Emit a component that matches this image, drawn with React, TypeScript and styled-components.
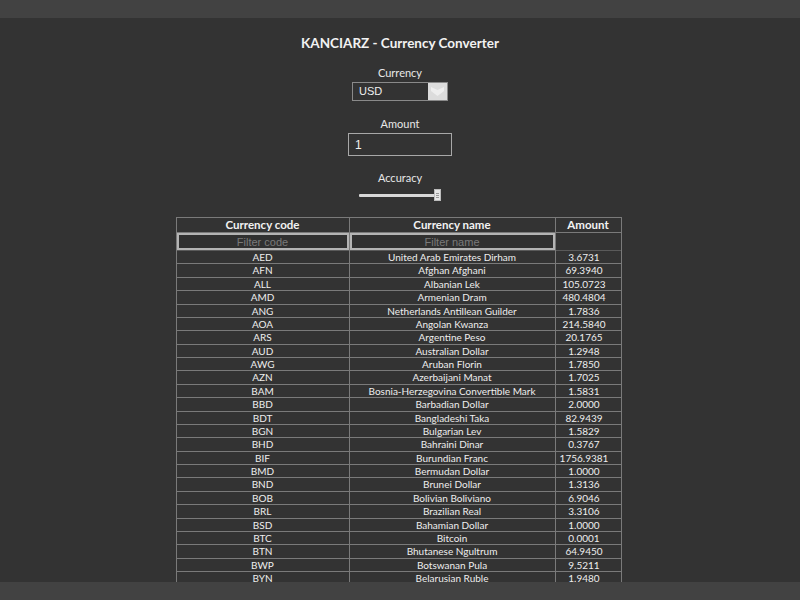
import { useState } from 'react';
import styled, { createGlobalStyle } from 'styled-components';

const rates: [string, string, string][] = [
  ['AED', 'United Arab Emirates Dirham', '3.6731'],
  ['AFN', 'Afghan Afghani', '69.3940'],
  ['ALL', 'Albanian Lek', '105.0723'],
  ['AMD', 'Armenian Dram', '480.4804'],
  ['ANG', 'Netherlands Antillean Guilder', '1.7836'],
  ['AOA', 'Angolan Kwanza', '214.5840'],
  ['ARS', 'Argentine Peso', '20.1765'],
  ['AUD', 'Australian Dollar', '1.2948'],
  ['AWG', 'Aruban Florin', '1.7850'],
  ['AZN', 'Azerbaijani Manat', '1.7025'],
  ['BAM', 'Bosnia-Herzegovina Convertible Mark', '1.5831'],
  ['BBD', 'Barbadian Dollar', '2.0000'],
  ['BDT', 'Bangladeshi Taka', '82.9439'],
  ['BGN', 'Bulgarian Lev', '1.5829'],
  ['BHD', 'Bahraini Dinar', '0.3767'],
  ['BIF', 'Burundian Franc', '1756.9381'],
  ['BMD', 'Bermudan Dollar', '1.0000'],
  ['BND', 'Brunei Dollar', '1.3136'],
  ['BOB', 'Bolivian Boliviano', '6.9046'],
  ['BRL', 'Brazilian Real', '3.3106'],
  ['BSD', 'Bahamian Dollar', '1.0000'],
  ['BTC', 'Bitcoin', '0.0001'],
  ['BTN', 'Bhutanese Ngultrum', '64.9450'],
  ['BWP', 'Botswanan Pula', '9.5211'],
  ['BYN', 'Belarusian Ruble', '1.9480'],
  ['BZD', 'Belize Dollar', '2.0095'],
  ['CAD', 'Canadian Dollar', '1.2563'],
];

const GlobalStyle = createGlobalStyle`
  html, body {
    margin: 0;
    padding: 0;
    background: #424242;
    height: 100%;
  }
  #root {
    height: 100%;
  }
`;

const Page = styled.div`
  height: 100%;
  box-sizing: border-box;
  padding: 18px 0;
  display: flex;
`;

const Main = styled.main`
  flex: 1;
  background: #333333;
  overflow: hidden;
  display: flex;
  flex-direction: column;
  align-items: center;
  font-family: Lato, 'Open Sans', sans-serif;
  color: #eeeeee;
`;

const Title = styled.h1`
  margin: 16px 0 0;
  font-size: 13.5px;
  font-weight: 700;
  line-height: 18px;
  color: #f2f2f2;
`;

const Field = styled.div<{ $gap?: number }>`
  display: flex;
  flex-direction: column;
  align-items: center;
  margin-top: ${(p) => p.$gap ?? 0}px;
`;

const Label = styled.label`
  font-size: 11px;
  line-height: 14px;
  margin-bottom: 2px;
  color: #e8e8e8;
`;

const SelectBox = styled.div`
  display: flex;
  width: 96px;
  height: 19px;
  box-sizing: border-box;
  border: 1px solid #8a8a8a;
  background: #333;
`;

const SelectText = styled.span`
  flex: 1;
  font-family: 'Liberation Sans', Arial, sans-serif;
  font-size: 11px;
  line-height: 17px;
  padding-left: 6px;
  color: #f0f0f0;
`;

const SelectArrow = styled.span`
  width: 19px;
  background: #dcdcdc;
  display: flex;
  align-items: center;
  justify-content: center;
`;

const AmountInput = styled.input`
  width: 104px;
  height: 23px;
  box-sizing: border-box;
  border: 1px solid #a8a8a8;
  background: #333;
  color: #f0f0f0;
  font-family: 'Liberation Sans', Arial, sans-serif;
  font-size: 12px;
  padding: 0 6px;
  outline: none;
`;

const SliderTrack = styled.div`
  position: relative;
  width: 82px;
  height: 12px;
  margin-top: 2px;
  display: flex;
  align-items: center;
`;

const Rail = styled.div`
  width: 100%;
  height: 3px;
  background: #d8d8d8;
  border-radius: 1px;
`;

const Thumb = styled.div`
  position: absolute;
  right: 0;
  top: 0;
  width: 7px;
  height: 12px;
  box-sizing: border-box;
  background: #e6e6e6;
  border: 1px solid #bcbcbc;
  display: flex;
  flex-direction: column;
  justify-content: center;
  gap: 1px;
  padding: 0 1px;
  & > i {
    display: block;
    height: 1px;
    background: #999;
  }
`;

const Table = styled.table`
  margin: 16px 3px 0 0;
  border-collapse: collapse;
  border: 1px solid #7a7a7a;
  table-layout: fixed;
  width: 442px;
  font-size: 10px;
`;

const HeadCell = styled.th<{ $w: number }>`
  width: ${(p) => p.$w}px;
  border: 1px solid #7a7a7a;
  font-size: 11.5px;
  font-weight: 700;
  line-height: 14px;
  padding: 0;
  color: #f2f2f2;
`;

const FilterCell = styled.td`
  padding: 0;
  border-left: 1px solid #7a7a7a;
  border-right: 1px solid #7a7a7a;
  height: 17px;
`;

const FilterInput = styled.input`
  width: 100%;
  height: 17px;
  box-sizing: border-box;
  border: 2px solid #b4b4b4;
  background: #303030;
  font-family: 'Liberation Sans', Arial, sans-serif;
  font-size: 11px;
  text-align: center;
  color: #eee;
  padding: 0;
  outline: none;
  &::placeholder {
    color: #7a7a7a;
  }
`;

const Cell = styled.td<{ $num?: boolean }>`
  border: 1px solid #7a7a7a;
  border-top-color: #5a5a5a;
  padding: 0 ${(p) => (p.$num ? '8px' : '0')} 0 0;
  text-align: center;
  line-height: 12.375px;
  white-space: nowrap;
  overflow: hidden;
  color: #eeeeee;
`;

export default function App() {
  const [amount, setAmount] = useState('1');
  const [code, setCode] = useState('');
  const [name, setName] = useState('');

  const rows = rates.filter(
    ([c, n]) =>
      c.toLowerCase().includes(code.toLowerCase()) &&
      n.toLowerCase().includes(name.toLowerCase()),
  );
  const mult = parseFloat(amount) || 0;

  return (
    <>
      <GlobalStyle />
      <Page>
        <Main>
          <Title>KANCIARZ - Currency Converter</Title>
          <Field $gap={14}>
            <Label>Currency</Label>
            <SelectBox>
              <SelectText>USD</SelectText>
              <SelectArrow>
                <svg width="13" height="11" viewBox="0 0 13 11">
                  <path d="M0 1 L6.5 4 L13 1 L13 5 L6.5 10 L0 5 Z" fill="#eeeeee" />
                </svg>
              </SelectArrow>
            </SelectBox>
          </Field>
          <Field $gap={16}>
            <Label>Amount</Label>
            <AmountInput value={amount} onChange={(e) => setAmount(e.target.value)} />
          </Field>
          <Field $gap={15}>
            <Label>Accuracy</Label>
            <SliderTrack>
              <Rail />
              <Thumb>
                <i />
                <i />
                <i />
              </Thumb>
            </SliderTrack>
          </Field>
          <Table>
            <thead>
              <tr>
                <HeadCell $w={172}>Currency code</HeadCell>
                <HeadCell $w={205}>Currency name</HeadCell>
                <HeadCell $w={65}>Amount</HeadCell>
              </tr>
              <tr>
                <FilterCell>
                  <FilterInput placeholder="Filter code" value={code} onChange={(e) => setCode(e.target.value)} />
                </FilterCell>
                <FilterCell>
                  <FilterInput placeholder="Filter name" value={name} onChange={(e) => setName(e.target.value)} />
                </FilterCell>
                <FilterCell />
              </tr>
            </thead>
            <tbody>
              {rows.map(([c, n, r]) => (
                <tr key={c}>
                  <Cell>{c}</Cell>
                  <Cell>{n}</Cell>
                  <Cell $num>{(parseFloat(r) * mult).toFixed(4)}</Cell>
                </tr>
              ))}
            </tbody>
          </Table>
        </Main>
      </Page>
    </>
  );
}
